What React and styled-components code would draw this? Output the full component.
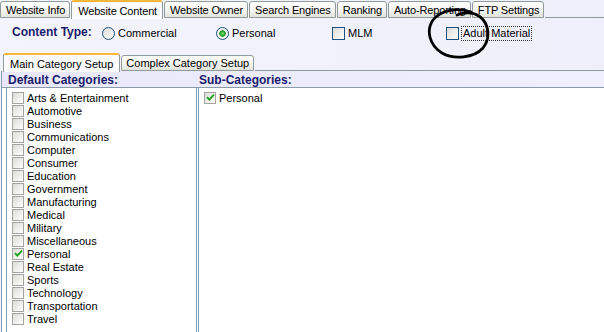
import styled, { createGlobalStyle } from "styled-components";

const GlobalStyle = createGlobalStyle`
  html, body {
    margin: 0;
    padding: 0;
    background: #ffffff;
  }
  body {
    font-family: "Liberation Sans", Arial, sans-serif;
    font-size: 11px;
    color: #000000;
  }
`;

const mainTabs = [
  "Website Info",
  "Website Content",
  "Website Owner",
  "Search Engines",
  "Ranking",
  "Auto-Reporting",
  "FTP Settings",
];

const categories = [
  "Arts & Entertainment",
  "Automotive",
  "Business",
  "Communications",
  "Computer",
  "Consumer",
  "Education",
  "Government",
  "Manufacturing",
  "Medical",
  "Military",
  "Miscellaneous",
  "Personal",
  "Real Estate",
  "Sports",
  "Technology",
  "Transportation",
  "Travel",
];

const Check = ({ checked, strong, size = 13 }) => (
  <CheckBox $strong={strong} $size={size}>
    {checked && (
      <svg width="9" height="9" viewBox="0 0 9 9">
        <path d="M1 4.2 L3.3 6.6 L8 1.6" fill="none" stroke="#21a121" strokeWidth="1.9" />
      </svg>
    )}
  </CheckBox>
);

const App = () => {
  return (
    <Page>
      <GlobalStyle />
      <TabBar>
        {mainTabs.map((t) => (
          <Tab key={t} $active={t === "Website Content"}>
            {t}
          </Tab>
        ))}
        <TabFill />
      </TabBar>

      <TypeRow>
        <TypeLabel>Content Type:</TypeLabel>
        <Option $width={114}>
          <Radio />
          Commercial
        </Option>
        <Option $width={116}>
          <Radio $checked />
          Personal
        </Option>
        <Option $width={114}>
          <Check strong />
          MLM
        </Option>
        <Option $width={100}>
          <Check strong />
          <Focus>Adult Material</Focus>
        </Option>
      </TypeRow>

      <SubTabBar>
        <SubTab $active>Main Category Setup</SubTab>
        <SubTab>Complex Category Setup</SubTab>
        <TabFill />
      </SubTabBar>

      <Panel>
        <HeaderBand>
          <Heading $width={191}>Default Categories:</Heading>
          <Heading>Sub-Categories:</Heading>
        </HeaderBand>
        <Columns>
          <ListBox>
            {categories.map((c) => (
              <Item key={c}>
                <Check size={12} checked={c === "Personal"} />
                {c}
              </Item>
            ))}
          </ListBox>
          <SubBox>
            <Item>
              <Check size={12} checked />
              Personal
            </Item>
          </SubBox>
        </Columns>
      </Panel>

      <Scribble width="70" height="54" viewBox="0 0 70 54">
        <path
          d="M44 5 C31 0 14 3 6 13 C-1 23 2 38 15 46 C27 53 47 51 56 41 C64 31 62 16 52 9 C46 5 37 5 30 8"
          fill="none"
          stroke="#000"
          strokeWidth="2.8"
          strokeLinecap="round"
        />
      </Scribble>
    </Page>
  );
};

export default App;

const Page = styled.div`
  position: relative;
  width: 604px;
  height: 332px;
  overflow: hidden;
  background: linear-gradient(to right, #f4f4fc, #efeffb);
`;

const TabBar = styled.div`
  display: flex;
  align-items: flex-end;
  height: 18px;
  gap: 1px;
`;

const Tab = styled.div`
  box-sizing: border-box;
  height: ${(p) => (p.$active ? "19px" : "17px")};
  margin-bottom: ${(p) => (p.$active ? "-1px" : "0")};
  padding: ${(p) => (p.$active ? "1px 5px 0 6px" : "1px 4px 0 5px")};
  display: flex;
  align-items: center;
  border: 1px solid #919b9c;
  border-bottom: ${(p) => (p.$active ? "none" : "1px solid #919b9c")};
  border-top: ${(p) => (p.$active ? "2px solid #f8b83a" : "1px solid #919b9c")};
  border-radius: 3px 3px 0 0;
  background: ${(p) =>
    p.$active
      ? "#fcfcfe"
      : "linear-gradient(to bottom, #ffffff, #f2f2ef 60%, #e3e3dd)"};
  font-size: 11px;
  letter-spacing: -0.15px;
  white-space: nowrap;
  color: #000;
`;

const TabFill = styled.div`
  flex: 1;
  align-self: stretch;
  border-bottom: 1px solid #919b9c;
`;

const TypeRow = styled.div`
  display: flex;
  align-items: center;
  height: 28px;
  padding: 0 0 0 12px;
  margin-top: 1px;
`;

const TypeLabel = styled.div`
  width: 90px;
  font-weight: bold;
  font-size: 12px;
  color: #1c1c6a;
  margin-top: -2px;
`;

const Option = styled.div`
  width: ${(p) => (p.$width ? `${p.$width}px` : "auto")};
  display: flex;
  align-items: center;
  gap: 3px;
  white-space: nowrap;
`;

const Radio = styled.span`
  box-sizing: border-box;
  width: 13px;
  height: 13px;
  border-radius: 50%;
  border: 1px solid #1c5180;
  background: ${(p) =>
    p.$checked
      ? "radial-gradient(circle, #7de07d 0, #21a121 2.5px, #21a121 3px, #eeeee8 3.5px, #fbfbf8 6px)"
      : "linear-gradient(135deg, #dcdcd7, #fbfbf9)"};
  flex-shrink: 0;
`;

const CheckBox = styled.span`
  box-sizing: border-box;
  width: ${(p) => p.$size}px;
  height: ${(p) => p.$size}px;
  border: 1px solid ${(p) => (p.$strong ? "#1c5180" : "#a3a3a3")};
  background: linear-gradient(135deg, #dcdcd7, #f4f4f2 70%, #ffffff);
  display: inline-flex;
  align-items: center;
  justify-content: center;
  flex-shrink: 0;
`;

const Focus = styled.span`
  outline: 1px dotted #333;
  padding: 0 1px;
  line-height: 13px;
`;

const SubTabBar = styled.div`
  display: flex;
  align-items: flex-end;
  height: 19px;
  padding-left: 3px;
  margin-top: 5px;
  gap: 1px;
`;

const SubTab = styled(Tab)`
  height: ${(p) => (p.$active ? "19px" : "16px")};
  padding: ${(p) => (p.$active ? "1px 6px 0 6px" : "0 4px 0 4px")};
  letter-spacing: 0;
`;

const Panel = styled.div`
  border-left: 1px solid #7f9db9;
  margin-left: 1px;
`;

const HeaderBand = styled.div`
  display: flex;
  align-items: center;
  height: 16px;
  padding-left: 6px;
  background: linear-gradient(to right, #e8e8fa, #efeffd);
  border-bottom: 1px solid #8a9aa8;
`;

const Heading = styled.div`
  width: ${(p) => (p.$width ? `${p.$width}px` : "auto")};
  font-weight: bold;
  font-size: 12px;
  color: #1c1c6a;
  margin-top: 1px;
`;

const Columns = styled.div`
  display: flex;
  height: 250px;
  background: #ffffff;
  padding-left: 4px;
`;

const ListBox = styled.div`
  box-sizing: border-box;
  width: 191px;
  border-left: 1px solid #7f9db9;
  border-right: 1px solid #7f9db9;
  padding: 3px 0 0 5px;
`;

const SubBox = styled.div`
  flex: 1;
  border-left: 1px solid #7f9db9;
  margin-left: 1px;
  padding: 3px 0 0 5px;
`;

const Item = styled.div`
  display: flex;
  align-items: center;
  gap: 3px;
  height: 13px;
  white-space: nowrap;
`;

const Scribble = styled.svg`
  position: absolute;
  left: 427px;
  top: 7px;
  pointer-events: none;
`;
